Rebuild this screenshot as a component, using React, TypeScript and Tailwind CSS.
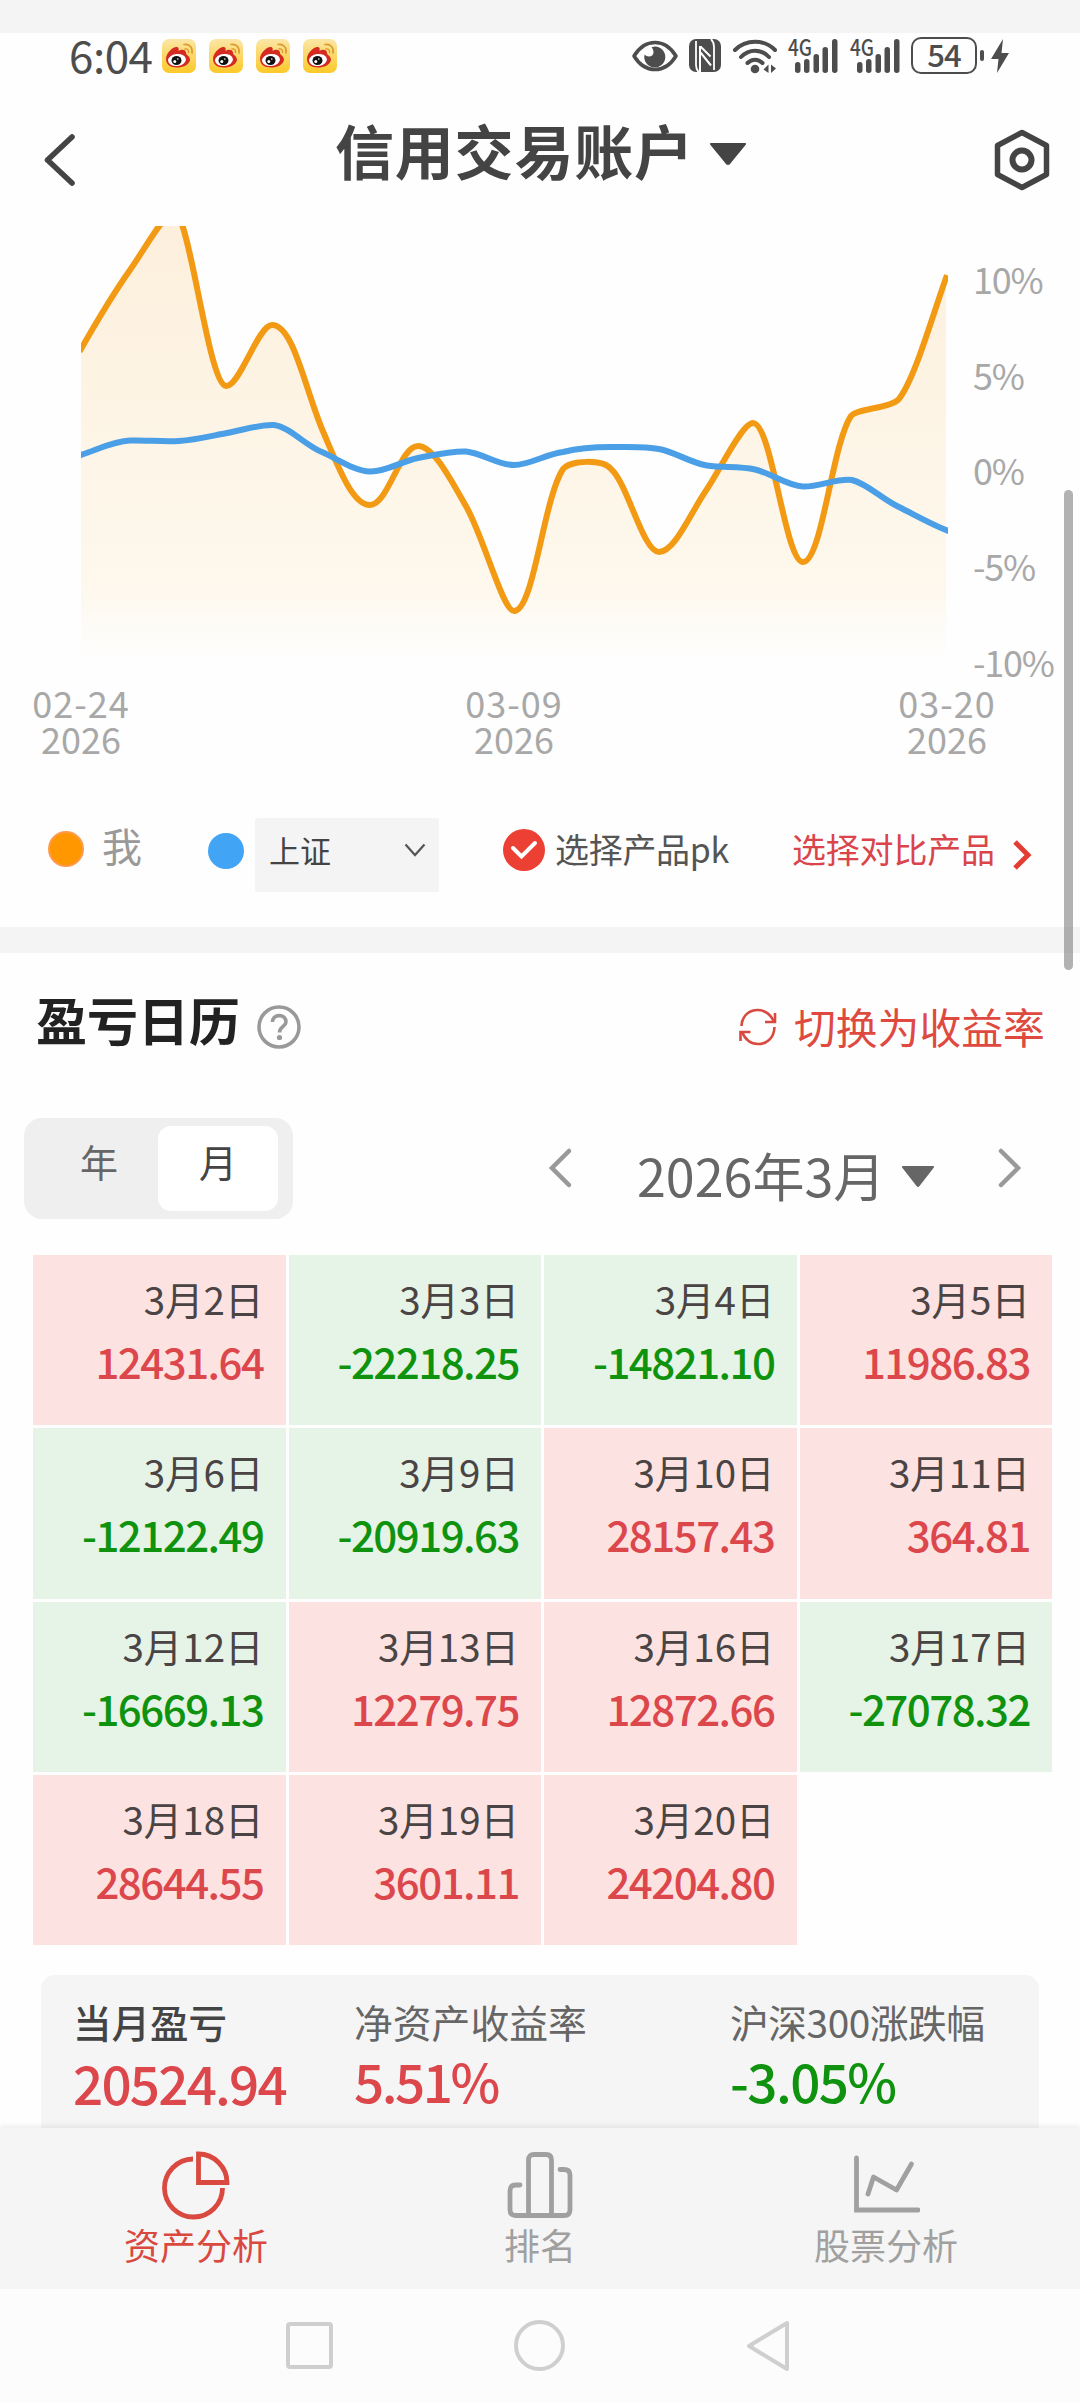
const days = [
  { date: "3月2日", value: "12431.64" },
  { date: "3月3日", value: "-22218.25" },
  { date: "3月4日", value: "-14821.10" },
  { date: "3月5日", value: "11986.83" },
  { date: "3月6日", value: "-12122.49" },
  { date: "3月9日", value: "-20919.63" },
  { date: "3月10日", value: "28157.43" },
  { date: "3月11日", value: "364.81" },
  { date: "3月12日", value: "-16669.13" },
  { date: "3月13日", value: "12279.75" },
  { date: "3月16日", value: "12872.66" },
  { date: "3月17日", value: "-27078.32" },
  { date: "3月18日", value: "28644.55" },
  { date: "3月19日", value: "3601.11" },
  { date: "3月20日", value: "24204.80" },
];

const yLabels = ["10%", "5%", "0%", "-5%", "-10%"];
const xLabels = ["02-24", "03-09", "03-20"];

const minePath =
  "M81 349 C97 321 113 294 130 270 C146 247 165 212 174 212 C190 212 208 386 226.5 386 C240 386 258 325 272 325 C293 325 304 385 322 429 C338 466 352 505 370 505 C388 505 400 446 418 446 C434 446 452 482 467 508 C485 541 503 611 514 611 C534 611 543 500 563 469 C570 460 603 459 611 469 C628 484 643 552 659 552 C675 552 691 512 707 489 C720 470 742 423 753 423 C772 423 785 562 803 562 C822 562 832 444 851 416 C857 408 890 409 899 399 C915 378 931 320 946 278";
const indexPath =
  "M81 455 C97 450 113 441 130 440.5 C146 440 162 442 179 441 C195 440 211 436 227 433 C243 430 262 424 274 425 C290 427 306 446 322 452 C338 459 354 471 370 471.5 C386 472 402 461 418 458 C434 455 450 451 466 451.5 C482 453 498 465 514 465 C530 465 546 454 563 452 C579 448 595 447 611 447 C627 447 645 446 659 449 C675 452 691 463 707 465.5 C723 468 739 466 755 469.5 C771 473 787 486 803 486.5 C819 487 837 478 852 480 C868 484 883 500 899 507 C915 515 931 524 946 530";

function WeiboIcon() {
  return (
    <svg width="34" height="34" viewBox="0 0 34 34">
      <defs>
        <linearGradient id="weiboBg" x1="0" y1="0" x2="0" y2="1">
          <stop offset="0" stopColor="#fbe6a6" />
          <stop offset="1" stopColor="#fcc927" />
        </linearGradient>
      </defs>
      <rect width="34" height="34" rx="7" fill="url(#weiboBg)" />
      <path
        d="M4 20 C4 15 9 9 14 8 C17 8 17 10 16.500 12 C19 10 24 10 24 14 C24 16 28 17 28 21 C27 26 21 28.500 15 28.500 C8 28.500 4 25 4 20Z"
        fill="#d52a22"
      />
      <ellipse cx="15" cy="21" rx="9" ry="6" fill="#fff" transform="rotate(-7 15 21)" />
      <ellipse cx="14.500" cy="21.500" rx="5" ry="4.600" fill="#111" />
      <circle cx="12.800" cy="22.500" r="1.500" fill="#fff" />
      <circle cx="15.800" cy="20" r="0.800" fill="#fff" />
      <path d="M22 5.500 C27 4.500 31 8.500 30 14" fill="none" stroke="#dd9a2e" strokeWidth="1.600" strokeLinecap="round" />
      <path d="M23 10 C25.500 9.500 27 11 26.500 13.500" fill="none" stroke="#dd9a2e" strokeWidth="1.400" strokeLinecap="round" />
    </svg>
  );
}

function SignalIcon() {
  return (
    <svg className="overflow-visible" width="52" height="36" viewBox="0 0 52 36" fill="#4d4d4d">
      <text x="1" y="18" fontSize="23" fontWeight="500" textLength="24" lengthAdjust="spacingAndGlyphs">4G</text>
      <rect x="8" y="24" width="5.500" height="11" rx="2.700" />
      <rect x="17" y="21" width="5.500" height="14" rx="2.700" />
      <rect x="26.500" y="16" width="5.500" height="19" rx="2.700" />
      <rect x="35.500" y="9" width="5.500" height="26" rx="2.700" />
      <rect x="45" y="1" width="5.500" height="34" rx="2.700" />
    </svg>
  );
}

function StatusBar() {
  return (
    <div className="flex h-12 items-center pb-[3px] pl-[69px] text-[#4d4d4d]">
      <span className="-mt-1 w-[93px] text-[44px] leading-none tracking-[-0.500px]">6:04</span>
      <div className="mt-px flex gap-[13px]">
        <WeiboIcon />
        <WeiboIcon />
        <WeiboIcon />
        <WeiboIcon />
      </div>

      {/* eye comfort */}
      <svg className="ml-[294px]" width="48" height="34" viewBox="0 0 48 34">
        <path d="M3 17 C14 -1 34 -1 45 17 C34 35 14 35 3 17Z" fill="none" stroke="#4d4d4d" strokeWidth="3.600" strokeLinejoin="round" />
        <path d="M24 7.500 A10.500 10.500 0 1 1 13.600 15.500 C16 18.500 22.500 18 22.500 13.500 C22.500 11 21.500 9.500 20.500 8.300Z" fill="#4d4d4d" />
      </svg>

      {/* nfc */}
      <svg className="ml-[10px]" width="32" height="33" viewBox="0 0 32 33" fill="none" stroke="#fff">
        <rect width="32" height="33" rx="7" fill="#4d4d4d" stroke="none" />
        <path d="M7 2 V26 Q7 30 9.500 33 M22 0 Q25 3 25 8 V31" strokeWidth="1.800" />
        <path d="M11 7 V33 M11.500 7.500 L21.500 17.500 M11.500 13.500 L22 26.500" strokeWidth="2" />
      </svg>

      {/* wifi */}
      <svg className="ml-[11px]" width="46" height="36" viewBox="0 0 46 36" fill="none" stroke="#4d4d4d" strokeWidth="4" strokeLinecap="round">
        <path d="M3 12 C14 1 32 1 43 12" />
        <path d="M9 19 C17 10.500 29 10.500 37 19" />
        <path d="M15.500 25 C20 20.500 26 20.500 30.500 25" />
        <circle cx="23" cy="31" r="4.300" fill="#4d4d4d" stroke="none" />
        <path d="M36.500 26.500 V35 L31.500 31.500Z M39 35 V26.500 L44 30.500Z" fill="#4d4d4d" stroke="none" />
      </svg>

      <div className="ml-[9px] flex gap-[10px]">
        <SignalIcon />
        <SignalIcon />
      </div>

      <div className="ml-[10px] flex h-[37px] w-[66px] items-center justify-center rounded-[10px] border-[2.500px] border-[#4d4d4d] text-[31px] leading-none font-medium tracking-[-1px]">
        <span className="-mt-1">54</span>
      </div>
      <div className="ml-[3px] h-[11px] w-1 rounded-xs bg-[#4d4d4d]"></div>
      <svg className="ml-[6px]" width="20" height="36" viewBox="0 0 20 36">
        <path d="M13 1 L1 21 H8.500 L7 35 L19 15 H11.500Z" fill="#4d4d4d" />
      </svg>
    </div>
  );
}

function Header() {
  return (
    <div className="flex h-[145px] items-center pt-[13px] pl-[42px]">
      <svg width="36" height="56" viewBox="0 0 36 56" fill="none" stroke="#444" strokeWidth="5.500" strokeLinecap="round" strokeLinejoin="round">
        <path d="M30 5 L5.500 28 L30 51" />
      </svg>
      <h1 className="mb-[21px] ml-[257px] w-[374px] text-[59px] leading-none font-bold tracking-[0.800px] text-[#444]">信用交易账户</h1>
      <svg className="mb-[13px]" width="38" height="24" viewBox="0 0 38 24">
        <path d="M2 1 H36 Q38 1 36.500 3 L21 22 Q19 24 17 22 L1.500 3 Q0 1 2 1Z" fill="#444" />
      </svg>
      <svg className="ml-[246px]" width="58" height="62" viewBox="0 0 58 62" fill="none" stroke="#444" strokeWidth="5.500">
        <path d="M29 3.500 L53.500 16.500 V45.500 L29 58.500 L4.500 45.500 V16.500Z" strokeLinejoin="round" />
        <circle cx="29" cy="31" r="9.500" strokeWidth="6" />
      </svg>
    </div>
  );
}

function ProfitChart() {
  return (
    <div className="h-[582px]">
      <div className="flex h-[458px]">
        <svg width="973" height="440" viewBox="0 226 973 440" fill="none">
          <defs>
            <linearGradient id="mineArea" gradientUnits="userSpaceOnUse" x1="0" y1="226" x2="0" y2="658">
              <stop offset="0" stopColor="#f59a1b" stopOpacity="0.150" />
              <stop offset="0.850" stopColor="#f8b530" stopOpacity="0.080" />
              <stop offset="0.950" stopColor="#f8c560" stopOpacity="0.030" />
              <stop offset="1" stopColor="#f8c560" stopOpacity="0.010" />
            </linearGradient>
            <clipPath id="plot">
              <rect x="81" y="226" width="867" height="432" />
            </clipPath>
          </defs>
          <g clipPath="url(#plot)">
            <path d={`${minePath} V657 H81Z`} fill="url(#mineArea)" />
            <path d={minePath} stroke="#f39a14" strokeWidth="6" strokeLinecap="square" />
            <path d={indexPath} stroke="#4b9fe6" strokeWidth="6" strokeLinecap="square" />
          </g>
        </svg>
        <div className="pt-[5px] text-[36px] leading-[95.700px] tracking-[-1.200px] whitespace-nowrap text-[#a8a8a8]">
          {yLabels.map((label) => (
            <div key={label}>{label}</div>
          ))}
        </div>
      </div>
      <div className="flex justify-between pr-[73px] pl-[21px] text-center text-[36px] leading-9 text-[#a8a8a8]">
        {xLabels.map((label) => (
          <div key={label} className="w-[120px]">
            <div className="tracking-[1px]">{label}</div>
            <div>2026</div>
          </div>
        ))}
      </div>
    </div>
  );
}

function Legend() {
  return (
    <div className="flex h-[119px] items-start pt-[10px] pl-[48px]">
      <div className="flex h-[74px] items-center">
        <div className="mb-3 size-9 rounded-full border-2 border-[#ff9a4c] bg-[#ff9800]"></div>
        <span className="mb-5 ml-[18px] text-[40px] leading-none text-[#999]">我</span>
        <div className="mb-2 ml-[66px] size-9 rounded-full bg-[#42a4f5]"></div>
      </div>
      <div className="ml-[11px] flex h-[74px] w-[184px] items-start justify-between rounded-xs bg-[#f4f4f4] pt-[14px] pr-[13px] pl-[14px]">
        <span className="text-[31px] leading-9 text-[#444]">上证</span>
        <svg className="mt-[11px]" width="22" height="15" viewBox="0 0 22 15" fill="none" stroke="#555" strokeWidth="2.200">
          <path d="M1.500 1.500 L11 12 L20.500 1.500" />
        </svg>
      </div>
      <svg className="mt-[11px] ml-[64px]" width="42" height="42" viewBox="0 0 42 42">
        <circle cx="21" cy="21" r="21" fill="#ec4034" />
        <path d="M10 19 L18.500 27.500 L32 14" fill="none" stroke="#fff" strokeWidth="4" strokeLinecap="round" />
      </svg>
      <span className="mt-[10px] ml-[10px] w-[237px] text-[34px] leading-[42px] tracking-[-0.300px] text-[#555]">选择产品pk</span>
      <span className="mt-[10px] w-[205px] text-[34px] leading-[42px] tracking-[-0.200px] whitespace-nowrap text-[#d9454b]">选择对比产品</span>
      <svg className="mt-[20px] ml-[14px]" width="22" height="34" viewBox="0 0 22 34" fill="none" stroke="#e43d33" strokeWidth="5">
        <path d="M4 4 L17 17 L4 30" />
      </svg>
    </div>
  );
}

function CalendarHeader() {
  return (
    <>
      <div className="flex h-[165px] items-start pt-[41px] pl-[36px]">
        <h2 className="w-[221px] text-[51px] leading-[51px] font-bold text-[#222]">盈亏日历</h2>
        <svg className="mt-[11px]" width="44" height="44" viewBox="0 0 44 44" fill="none" stroke="#999">
          <circle cx="22" cy="22" r="20" strokeWidth="3.600" />
          <path d="M15.500 17 C15.500 8.500 29 8.500 29 17 C29 21.500 22.500 21.500 22.500 27.500" strokeWidth="3.600" />
          <circle cx="22.500" cy="32.500" r="2.600" fill="#999" stroke="none" />
        </svg>
        <svg className="mt-[14px] ml-[438px]" width="38" height="38" viewBox="0 0 38 38" fill="none" stroke="#d9493f" strokeWidth="2.600">
          <path d="M2.500 18 C3 7 11 2 18.500 2 C27 2 32 7 35 14" />
          <path d="M35.500 19 C35 31 27 36 19 36 C11 36 6 31 3 24" />
          <path d="M36 5 V14 H26 M1.500 33 V24 H11.500" />
        </svg>
        <span className="mt-[11px] ml-[17px] text-[41.800px] leading-[42px] whitespace-nowrap text-[#de4a40]">切换为收益率</span>
      </div>

      <div className="flex h-[137px] items-start pl-6">
        <div className="flex h-[101px] w-[269px] rounded-[18px] bg-[#efefef] py-2 pr-[15px] text-[38px] leading-[70px]">
          <div className="w-[134px] pl-[56px] text-[#666]">年</div>
          <div className="h-[85px] w-[120px] rounded-[13px] bg-white text-center text-[#444]">月</div>
        </div>
        <svg className="mt-[29px] ml-[254px]" width="26" height="42" viewBox="0 0 26 42" fill="none" stroke="#999" strokeWidth="4.500" strokeLinecap="round">
          <path d="M22 4 L5 21 L22 38" />
        </svg>
        <span className="mt-[31px] ml-[64px] w-[264px] text-[52px] leading-[51px] text-[#666]">2026年3月</span>
        <svg className="mt-[48px]" width="34" height="22" viewBox="0 0 34 22">
          <path d="M2 0 H32 Q34 0 32.500 2 L18.500 20 Q17 22 15.500 20 L1.500 2 Q0 0 2 0Z" fill="#666" />
        </svg>
        <svg className="mt-[29px] ml-[61px]" width="26" height="42" viewBox="0 0 26 42" fill="none" stroke="#999" strokeWidth="4.500" strokeLinecap="round">
          <path d="M5 4 L22 21 L5 38" />
        </svg>
      </div>
    </>
  );
}

function CalendarGrid() {
  return (
    <div className="mr-[28px] ml-[33px] grid h-[690px] grid-cols-4 grid-rows-4 gap-[3px]">
      {days.map((day) => {
        const loss = day.value.startsWith("-");
        return (
          <div
            key={day.date}
            className={`pt-[19px] pr-[22px] text-right ${loss ? "bg-[#e6f3e7]" : "bg-[#fde2e2]"}`}
          >
            <div className="text-[38.500px] leading-[48px] text-[#4a4444]">{day.date}</div>
            <div className={`mt-[15px] text-[42px] leading-[48px] font-medium tracking-[-1.500px] ${loss ? "text-[#0f930f]" : "text-[#dc474c]"}`}>
              {day.value}
            </div>
          </div>
        );
      })}
    </div>
  );
}

function MonthSummary() {
  return (
    <div className="mt-[30px] mr-[41px] ml-[41px] flex h-[153px] rounded-t-[14px] bg-[#f5f5f5] pt-[26px] pl-[32px] text-[38.800px] leading-[40px] whitespace-nowrap">
      <div className="w-[281px]">
        <div className="text-[38.500px] font-medium text-[#444]">当月盈亏</div>
        <div className="mt-[15px] text-[53px] leading-[53px] font-medium tracking-[-1.800px] text-[#dc474c]">20524.94</div>
      </div>
      <div className="w-[376px]">
        <div className="text-[#666]">净资产收益率</div>
        <div className="mt-[13px] text-[53px] leading-[53px] font-medium tracking-[-2.500px] text-[#dc474c]">5.51%</div>
      </div>
      <div>
        <div className="tracking-[-0.500px] text-[#666]">沪深300涨跌幅</div>
        <div className="mt-[13px] text-[53px] leading-[53px] font-medium tracking-[-1.600px] text-[#0f930f]">-3.05%</div>
      </div>
    </div>
  );
}

function TabBar() {
  return (
    <div className="flex h-[161px] bg-[#f5f5f5] px-6 pt-[22px] text-[36px] leading-[36px] text-[#a0a0a0] shadow-[0_-2px_6px_rgba(0,0,0,0.080)]">
      <div className="flex flex-1 flex-col items-center text-[#d9493f]">
        <svg width="68" height="70" viewBox="0 0 68 70" fill="none" stroke="currentColor" strokeWidth="4.800">
          <path d="M31 9 A29 29 0 1 0 60.500 38" />
          <path d="M36.500 4 V32.500 H65 C65 17 52 4 36.500 4Z" />
        </svg>
        <span className="mt-[6px]">资产分析</span>
      </div>
      <div className="flex flex-1 flex-col items-center">
        <svg width="68" height="70" viewBox="0 0 68 70" fill="none" stroke="currentColor" strokeWidth="4.800" strokeLinecap="round">
          <path d="M14 35 H10 Q4 35 4 41 V60 Q4 65.500 10 65.500 H58 Q64 65.500 64 60 V25 Q64 19.500 58 19.500 H54" />
          <path d="M22.500 65 V10 Q22.500 4.500 28 4.500 H40 Q45.500 4.500 45.500 10 V65" />
        </svg>
        <span className="mt-[6px]">排名</span>
      </div>
      <div className="flex flex-1 flex-col items-center">
        <svg className="ml-1" width="68" height="70" viewBox="0 0 68 70" fill="none" stroke="currentColor" strokeWidth="4.800" strokeLinecap="round">
          <path d="M4.500 8 V60 H66" />
          <path d="M16 44 L21.500 27 L44.500 40 L59.500 14" strokeLinejoin="round" />
        </svg>
        <span className="mt-[6px] ml-1">股票分析</span>
      </div>
    </div>
  );
}

function SystemNav() {
  return (
    <div className="flex h-[114px] items-center bg-[#fcfcfc] pb-px pl-[286px]">
      <div className="size-[47px] rounded-[4px] border-4 border-[#cfcfcf]"></div>
      <div className="ml-[181px] size-[51px] rounded-full border-4 border-[#cfcfcf]"></div>
      <svg className="ml-[180px]" width="46" height="54" viewBox="0 0 46 54" fill="none" stroke="#cfcfcf" strokeWidth="4" strokeLinejoin="round">
        <path d="M42 4 V50 L4 27Z" />
      </svg>
    </div>
  );
}

export default function App() {
  return (
    <div className="relative h-[2403px] w-[1080px] overflow-hidden bg-[#fefefe] font-['Noto_Sans_CJK_SC',sans-serif]">
      <div className="h-[33px] bg-[#f4f4f4]"></div>
      <StatusBar />
      <Header />
      <ProfitChart />
      <Legend />
      <div className="h-[26px] bg-[#f4f4f4]"></div>
      <CalendarHeader />
      <CalendarGrid />
      <MonthSummary />
      <TabBar />
      <SystemNav />

      {/* scroll thumb */}
      <div className="absolute top-[490px] right-[7px] h-[480px] w-[9px] rounded-full bg-[#888]/65"></div>
    </div>
  );
}
